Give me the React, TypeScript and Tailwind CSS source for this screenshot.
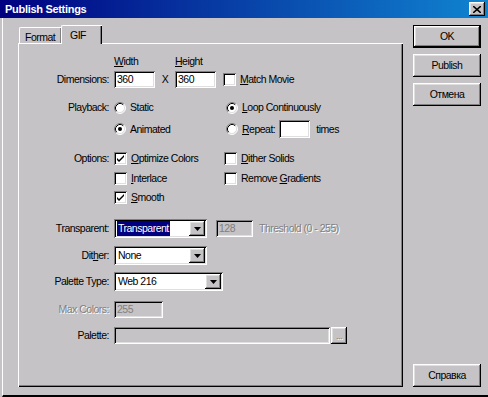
import React from "react";

const sunken =
  "shadow-[inset_1px_1px_#808080,inset_-1px_-1px_#fff,inset_2px_2px_#000,inset_-2px_-2px_#dfdfdf]";
const raised =
  "shadow-[inset_-1px_-1px_#000,inset_1px_1px_#fff,inset_-2px_-2px_#808080,inset_2px_2px_#dfdfdf]";
const dim = "text-[#808080] [text-shadow:1px_1px_0_#fff]";

function Label({ children, disabled }: { children?: React.ReactNode; disabled?: boolean }) {
  return (
    <span className={`w-[90px] shrink-0 text-right mr-[5px] ${disabled ? dim : ""}`}>
      {children}
    </span>
  );
}

function Check({ checked }: { checked?: boolean }) {
  return (
    <span className={`w-[13px] h-[13px] shrink-0 bg-white flex items-center justify-center ${sunken}`}>
      {checked && (
        <svg width="9" height="9" viewBox="0 0 9 9">
          <path d="M1 4 L3 6 L8 1 L8 3 L3 8 L1 6 Z" fill="#000" />
        </svg>
      )}
    </span>
  );
}

function Radio({ checked }: { checked?: boolean }) {
  return (
    <svg width="12" height="12" viewBox="0 0 12 12" className="shrink-0">
      <circle cx="6" cy="6" r="5" fill="#fff" />
      <path d="M2.11 9.89 A5.5 5.5 0 0 1 9.89 2.11" stroke="#808080" fill="none" />
      <path d="M9.89 2.11 A5.5 5.5 0 0 1 2.11 9.89" stroke="#fff" fill="none" />
      <path d="M2.82 9.18 A4.5 4.5 0 0 1 9.18 2.82" stroke="#000" fill="none" />
      <path d="M9.18 2.82 A4.5 4.5 0 0 1 2.82 9.18" stroke="#dfdfdf" fill="none" />
      {checked && <circle cx="6" cy="6" r="2" fill="#000" />}
    </svg>
  );
}

function Arrow() {
  return (
    <svg width="7" height="4" viewBox="0 0 7 4">
      <path d="M0 0 H7 L3.5 4 Z" fill="#000" />
    </svg>
  );
}

function Select({ value, width, active }: { value: string; width: string; active?: boolean }) {
  return (
    <div className={`${width} h-[19px] bg-white flex items-stretch p-[2px] ${sunken}`}>
      <div className="flex-1 flex items-center pl-[1px]">
        <span className={active ? "bg-[#000080] text-white px-[1px] leading-[15px]" : "px-[1px]"}>
          {value}
        </span>
      </div>
      <div className={`w-[16px] bg-[#c6c3c6] flex items-center justify-center ${raised}`}>
        <Arrow />
      </div>
    </div>
  );
}

function Field({ value, width, disabled }: { value?: string; width: string; disabled?: boolean }) {
  return (
    <div
      className={`${width} h-[17px] flex items-center pl-[3px] ${sunken} ${
        disabled ? "bg-[#c6c3c6] text-[#808080]" : "bg-white"
      }`}
    >
      {value}
    </div>
  );
}

function Button({ children, isDefault }: { children: React.ReactNode; isDefault?: boolean }) {
  return (
    <div className={`w-[68px] h-[23px] shrink-0 ${isDefault ? "border border-black" : ""}`}>
      <div className={`h-full w-full flex items-center justify-center ${raised}`}>{children}</div>
    </div>
  );
}

export default function App() {
  return (
    <div className="w-[488px] h-[397px] bg-[#c6c3c6] flex flex-col text-black text-[10.5px] tracking-[-0.5px] font-['Liberation_Sans',Arial,sans-serif] leading-none select-none">
      {/* title bar */}
      <div className="h-[18px] shrink-0 flex items-center justify-between pl-[5px] pr-[3px] bg-[linear-gradient(90deg,#000080,#1084d0)]">
        <span className="text-white text-[11px] font-bold tracking-[-0.3px]">Publish Settings</span>
        <div className={`w-[16px] h-[14px] bg-[#c6c3c6] flex items-center justify-center ${raised}`}>
          <svg width="8" height="7" viewBox="0 0 8 7">
            <path d="M0 0 L8 7 M8 0 L0 7" stroke="#000" strokeWidth="1.6" />
          </svg>
        </div>
      </div>

      <div className="flex-1 flex ml-[2px] border-l border-white border-b-2 border-b-black pl-[15px] pt-[7px]">
        {/* tabs + panel */}
        <div className="w-[385px] flex flex-col">
          <div className="h-[18px] flex items-end pl-[1px]">
            <div className="w-[42px] h-[16px] overflow-hidden whitespace-nowrap border-t border-l border-white rounded-tl-[2px] shadow-[inset_-1px_0_#808080] pl-[5px] pt-[4px]">
              Format
            </div>
            <div className="relative z-10 w-[41px] h-[19px] -mb-[1px] bg-[#c6c3c6] border-t border-l border-white rounded-tl-[2px] shadow-[inset_-1px_0_#000,inset_-2px_0_#808080] pl-[8px] pt-[4px]">
              GIF
            </div>
          </div>

          <div className="h-[344px] flex flex-col border-t border-l border-white shadow-[inset_-1px_-1px_#000,inset_-2px_-2px_#808080]">
            {/* Width / Height headers */}
            <div className="mt-[11px] h-[13px] flex items-center">
              <span className="w-[95px]" />
              <span className="w-[61px]">
                <span className="underline">W</span>idth
              </span>
              <span>
                <span className="underline">H</span>eight
              </span>
            </div>

            {/* Dimensions */}
            <div className="mt-[3px] h-[17px] flex items-center">
              <Label>Dimensions:</Label>
              <Field value="360" width="w-[41px]" />
              <span className="w-[20px] text-center">X</span>
              <Field value="360" width="w-[41px]" />
              <span className="ml-[7px]">
                <Check />
              </span>
              <span className="ml-[4px]">
                <span className="underline">M</span>atch Movie
              </span>
            </div>

            {/* Playback */}
            <div className="mt-[13px] h-[13px] flex items-center">
              <Label>Playback:</Label>
              <div className="w-[112px] flex items-center">
                <Radio />
                <span className="ml-[4px]">Static</span>
              </div>
              <Radio checked />
              <span className="ml-[4px]">
                <span className="underline">L</span>oop Continuously
              </span>
            </div>
            <div className="mt-[6px] h-[18px] flex items-center">
              <Label />
              <div className="w-[112px] flex items-center">
                <Radio checked />
                <span className="ml-[4px]">Animated</span>
              </div>
              <Radio />
              <span className="ml-[4px]">
                <span className="underline">R</span>epeat:
              </span>
              <div className={`ml-[4px] w-[31px] h-[18px] bg-white ${sunken}`} />
              <span className="ml-[6px]">times</span>
            </div>

            {/* Options */}
            <div className="mt-[14px] h-[13px] flex items-center">
              <Label>Options:</Label>
              <div className="w-[110px] flex items-center">
                <Check checked />
                <span className="ml-[4px]">
                  <span className="underline">O</span>ptimize Colors
                </span>
              </div>
              <Check />
              <span className="ml-[4px]">
                <span className="underline">D</span>ither Solids
              </span>
            </div>
            <div className="mt-[7px] h-[13px] flex items-center">
              <Label />
              <div className="w-[110px] flex items-center">
                <Check />
                <span className="ml-[4px]">
                  <span className="underline">I</span>nterlace
                </span>
              </div>
              <Check />
              <span className="ml-[4px]">
                Remove <span className="underline">G</span>radients
              </span>
            </div>
            <div className="mt-[6px] h-[13px] flex items-center">
              <Label />
              <Check checked />
              <span className="ml-[4px]">
                <span className="underline">S</span>mooth
              </span>
            </div>

            {/* Transparent */}
            <div className="mt-[15px] h-[19px] flex items-center">
              <Label>Transparent:</Label>
              <Select value="Transparent" width="w-[93px]" active />
              <div className="ml-[9px]">
                <Field value="128" width="w-[37px]" disabled />
              </div>
              <span className={`ml-[6px] ${dim}`}>Threshold (0 - 255)</span>
            </div>

            {/* Dither */}
            <div className="mt-[8px] h-[19px] flex items-center">
              <Label>
                Dit<span className="underline">h</span>er:
              </Label>
              <Select value="None" width="w-[93px]" />
            </div>

            {/* Palette Type */}
            <div className="mt-[7px] h-[19px] flex items-center">
              <Label>Palette Type:</Label>
              <Select value="Web 216" width="w-[109px]" />
            </div>

            {/* Max Colors */}
            <div className="mt-[10px] h-[17px] flex items-center">
              <Label disabled>Max Colors:</Label>
              <Field value="255" width="w-[49px]" disabled />
            </div>

            {/* Palette */}
            <div className="mt-[9px] h-[17px] flex items-center">
              <Label>Palette:</Label>
              <Field width="w-[216px]" disabled />
              <div className={`ml-[1px] w-[16px] h-[17px] flex items-end justify-center pb-[3px] ${raised}`}>
                <span className={`text-[9px] ${dim}`}>...</span>
              </div>
            </div>
          </div>
        </div>

        {/* buttons */}
        <div className="ml-[10px] h-[362px] flex flex-col gap-[6px]">
          <Button isDefault>OK</Button>
          <Button>Publish</Button>
          <Button>Отмена</Button>
          <div className="mt-auto">
            <Button>Справка</Button>
          </div>
        </div>
      </div>
    </div>
  );
}
